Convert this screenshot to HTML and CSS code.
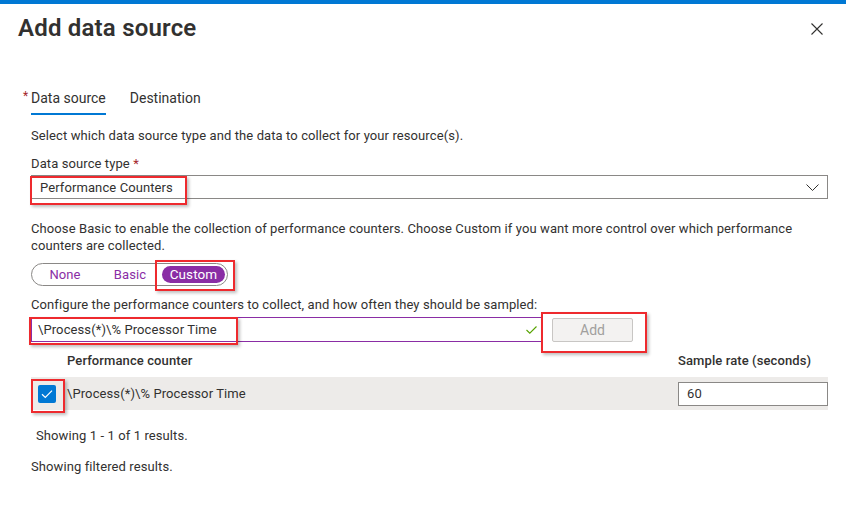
FILE: index.html
```html
<!DOCTYPE html>
<html lang="en">
<head>
<meta charset="utf-8">
<title>Add data source</title>
<link rel="stylesheet" href="styles.css">
</head>
<body>
<div class="topbar"></div>
<header class="header">
  <h1 class="title">Add data source</h1>
  <button class="close" aria-label="Close">
    <svg width="12" height="12" viewBox="0 0 12 12"><path d="M0.5 0.5L11.5 11.5M11.5 0.5L0.5 11.5" stroke="#323130" stroke-width="1.1" fill="none"/></svg>
  </button>
</header>
<nav class="tabs">
  <div class="tab"><span class="tab-req">*</span><span class="tab-label active">Data source</span></div>
  <div class="tab"><span class="tab-label">Destination</span></div>
</nav>
<main class="content">
  <p class="text desc">Select which data source type and the data to collect for your resource(s).</p>
  <div class="text label">Data source type <span class="req">*</span></div>
  <div class="dropdown hl hl-dd">
    <span class="dd-value">Performance Counters</span>
    <svg class="chev" width="13" height="8" viewBox="0 0 13 8"><path d="M0.5 0.5L6.5 6.5L12.5 0.5" stroke="#323130" stroke-width="1" fill="none"/></svg>
  </div>
  <p class="text help">Choose Basic to enable the collection of performance counters. Choose Custom if you want more control over which performance counters are collected.</p>
  <div class="pill">
    <span class="opt opt-none">None</span>
    <span class="opt opt-basic">Basic</span>
    <span class="opt opt-custom hl hl-custom">Custom</span>
  </div>
  <div class="text label2">Configure the performance counters to collect, and how often they should be sampled:</div>
  <div class="addrow">
    <div class="input hl hl-input">
      <span class="input-value">\Process(*)\% Processor Time</span>
      <svg class="valid" width="11" height="8" viewBox="0 0 11 8"><path d="M0.5 4L3.8 7.2L10.5 0.5" stroke="#57a300" stroke-width="1.1" fill="none"/></svg>
    </div>
    <button class="add hl hl-add" disabled>Add</button>
  </div>
  <div class="table">
    <div class="thead">
      <div class="c-check"></div>
      <div class="c-name">Performance counter</div>
      <div class="c-rate">Sample rate (seconds)</div>
    </div>
    <div class="trow">
      <div class="c-check">
        <span class="cb hl hl-cb">
          <svg width="12" height="10" viewBox="0 0 12 10"><path d="M1 5.2L4.3 8.4L11 1.6" stroke="#ffffff" stroke-width="1.2" fill="none"/></svg>
        </span>
      </div>
      <div class="c-name">\Process(*)\% Processor Time</div>
      <div class="c-rate"><div class="rate-input">60</div></div>
    </div>
  </div>
  <p class="text showing">Showing 1 - 1 of 1 results.</p>
  <p class="text filtered">Showing filtered results.</p>
</main>
</body>
</html>
```

FILE: styles.css
```css
* { box-sizing: border-box; }

html, body {
  margin: 0;
  padding: 0;
  background: #ffffff;
}

body {
  width: 846px;
  height: 511px;
  overflow: hidden;
  font-family: "Segoe UI", Roboto, "Noto Sans", sans-serif;
  font-size: 13px;
  color: #323130;
}

.topbar {
  height: 4px;
  background: #0078d4;
}

.header {
  display: flex;
  align-items: flex-start;
  justify-content: space-between;
  padding: 8px 23px 0 18px;
}

.title {
  margin: 0;
  font-size: 24px;
  line-height: 32px;
  font-weight: 600;
  letter-spacing: 0.2px;
  color: #323130;
}

.close {
  margin-top: 11px;
  padding: 0;
  border: 0;
  background: none;
  width: 12px;
  height: 12px;
  display: flex;
}

.tabs {
  display: flex;
  gap: 24px;
  padding-left: 23px;
  margin-top: 45px;
}

.tab {
  display: flex;
  align-items: flex-start;
  font-size: 14px;
  line-height: 18px;
}

.tab-req {
  color: #a4262c;
  font-size: 12px;
  line-height: 12px;
  width: 8px;
  margin-top: 1px;
}

.tab-label {
  padding-bottom: 6px;
  border-bottom: 2px solid transparent;
}

.tab-label.active {
  border-bottom-color: #0078d4;
}

.content {
  padding: 0 18px 0 31px;
  letter-spacing: 0.1px;
}

.text {
  margin: 0;
  line-height: 18px;
}

.desc { margin-top: 12px; }
.label { margin-top: 10px; }
.req { color: #a4262c; }

.dropdown {
  margin-top: 2px;
  height: 24px;
  border: 1px solid #8a8886;
  display: flex;
  align-items: center;
  justify-content: space-between;
  padding: 0 8px 0 8px;
}

.chev { margin-top: 1px; }

.help {
  margin-top: 21px;
  line-height: 17px;
}

.pill {
  margin-top: 9px;
  width: 197px;
  height: 23px;
  border: 1px solid #8a8886;
  border-radius: 12px;
  display: flex;
  align-items: center;
}

.opt {
  color: #8a2da5;
  text-align: center;
  line-height: 17px;
}

.opt-none { width: 66px; }
.opt-basic { width: 64px; }

.opt-custom {
  width: 63px;
  height: 17px;
  border-radius: 9px;
  background: #8a2da5;
  color: #ffffff;
  font-size: 13.5px;
}

.label2 { margin-top: 10px; }

.addrow {
  margin-top: 3px;
  display: flex;
  align-items: center;
  gap: 10px;
}

.input {
  width: 511px;
  height: 25px;
  border: 1px solid #8a2da5;
  display: flex;
  align-items: center;
  justify-content: space-between;
  padding: 0 4px 0 6px;
}

.valid { margin-top: 1px; }

.add {
  width: 81px;
  height: 24px;
  border: 1px solid #c8c6c4;
  background: #f3f2f1;
  color: #a19f9d;
  font-family: inherit;
  font-size: 14px;
  padding: 0;
  border-radius: 2px;
}

.table { margin-top: 10px; }

.thead, .trow {
  display: flex;
  align-items: center;
}

.thead {
  font-weight: 500;
  line-height: 18px;
  padding-bottom: 7px;
}

.trow {
  height: 33px;
  background: #edebe9;
}

.c-check {
  width: 36px;
  flex: none;
  display: flex;
  padding-left: 7px;
}

.c-name { flex: 1; }

.c-rate {
  width: 150px;
  flex: none;
}

.cb {
  width: 18px;
  height: 18px;
  background: #0078d4;
  border-radius: 2px;
  display: flex;
  align-items: center;
  justify-content: center;
}

.rate-input {
  height: 24px;
  border: 1px solid #8a8886;
  background: #ffffff;
  padding-left: 8px;
  line-height: 22px;
}

.showing {
  margin-top: 17px;
  padding-left: 5px;
}

.filtered { margin-top: 13px; }

/* red annotation boxes drawn over the controls */
.hl { position: relative; }

.hl::after {
  content: "";
  position: absolute;
  border: 2px solid #ee2a2e;
  box-shadow: 2px 2px 3px rgba(0, 0, 0, 0.25);
  pointer-events: none;
}

.hl-dd::after { left: -2px; top: 0; width: 153px; height: 25px; }
.hl-custom::after { left: -7px; top: -6px; width: 76px; height: 27px; }
.hl-input::after { left: -3px; top: -1px; width: 205px; height: 24px; }
.hl-add::after { left: -12px; top: -7px; width: 102px; height: 37px; }
.hl-cb::after { left: -7px; top: -6px; width: 30px; height: 30px; }
```
